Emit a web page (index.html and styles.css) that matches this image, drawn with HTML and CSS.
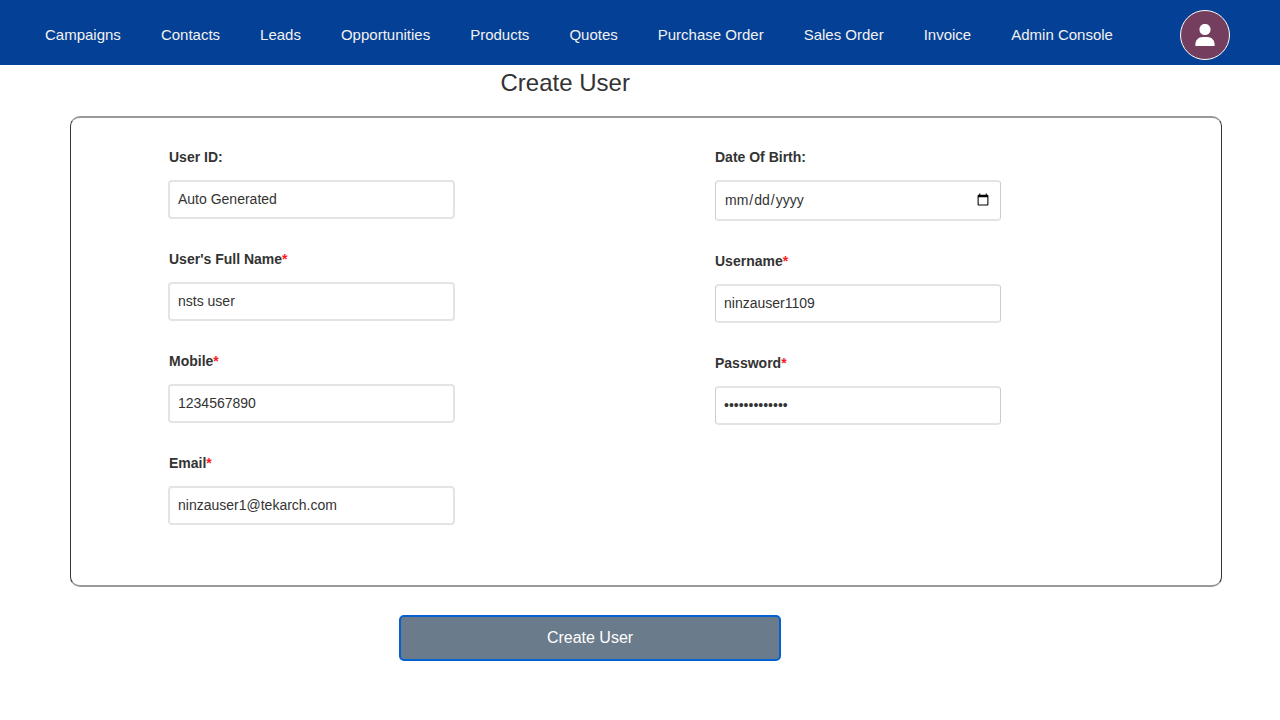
FILE: index.html
```html
<!DOCTYPE html>
<html lang="en">
<head>
<meta charset="utf-8">
<title>Create User</title>
<link rel="stylesheet" href="styles.css">
</head>
<body>
<nav class="navbar">
  <a>Campaigns</a><a>Contacts</a><a>Leads</a><a>Opportunities</a><a>Products</a><a>Quotes</a><a>Purchase Order</a><a>Sales Order</a><a>Invoice</a><a>Admin Console</a>
  <div class="avatar"><svg width="20" height="22" viewBox="0 0 20 22"><circle cx="10" cy="5.5" r="5.600" fill="#fff"/><path d="M0.800 22Q0.300 22 0.300 21C0.500 16.200 3.200 13 8 13h4c4.800 0 7.500 3.200 7.700 8Q19.700 22 19.200 22z" fill="#fff"/></svg></div>
</nav>
<h1 class="title">Create User</h1>
<form class="form">
  <div class="panel">
    <div class="column">
      <div class="field"><label>User ID:</label><div class="input soft">Auto Generated</div></div>
      <div class="field"><label>User's Full Name<span class="req">*</span></label><div class="input soft">nsts user</div></div>
      <div class="field"><label>Mobile<span class="req">*</span></label><div class="input soft">1234567890</div></div>
      <div class="field"><label>Email<span class="req">*</span></label><div class="input soft">ninzauser1@tekarch.com</div></div>
    </div>
    <div class="column">
      <div class="field"><label>Date Of Birth:</label><input class="input date" type="date"></div>
      <div class="field"><label>Username<span class="req">*</span></label><div class="input">ninzauser1109</div></div>
      <div class="field"><label>Password<span class="req">*</span></label><input class="input password" type="password" value="abcdefghijklm"></div>
    </div>
  </div>
  <button class="submit" type="button">Create User</button>
</form>
</body>
</html>
```
FILE: styles.css
```css
* { box-sizing: border-box; }
body { margin: 0; background: #fff; color: #333; font-family: "Liberation Sans", Arial, sans-serif; font-size: 14px; height: 720px; overflow: hidden; }
.navbar { height: 65px; background: #044095; display: flex; align-items: center; gap: 40px; padding: 5px 50px 0 45px; }
.navbar a { color: #f2f2f2; font-size: 15px; line-height: 20px; white-space: nowrap; }
.avatar { margin-left: auto; width: 50px; height: 50px; border-radius: 50%; border: 1px solid #fff; background: #743e5e; display: flex; align-items: center; justify-content: center; }
.title { margin: 4px 0 0 500.5px; font-size: 24px; line-height: 28px; font-weight: 400; }
.form { margin: 19px 58px 0 70px; }
.panel { height: 471px; border: solid; border-width: 2px 1px; border-color: #999 #333; border-radius: 10px; display: flex; padding: 31px 98px; gap: 260px; }
.column { width: 286px; }
.field { margin-bottom: 32px; }
.field label { display: block; font-weight: 700; line-height: 16px; margin-bottom: 15px; }
.req { color: #ff1a1a; }
.input { display: block; width: 100%; height: 39px; border: solid; border-width: 2px 1px; border-color: #e4e4e4 #ccc; border-radius: 4px; padding: 0 8px; font: 14px/34px "Liberation Sans", Arial, sans-serif; color: #333; background: #fff; }
.soft { width: 287px; margin-left: -1px; border-width: 2px; border-color: #e4e4e4; }
.date { height: 41px; padding-bottom: 1px; }
.password { padding-bottom: 2px; }
.submit { display: block; width: 382px; height: 46px; margin: 28px 0 0 329px; border: 2px solid #0560d2; border-radius: 5px; background: #6a7b8b; color: #fff; font: 16px "Liberation Sans", Arial, sans-serif; }
```
